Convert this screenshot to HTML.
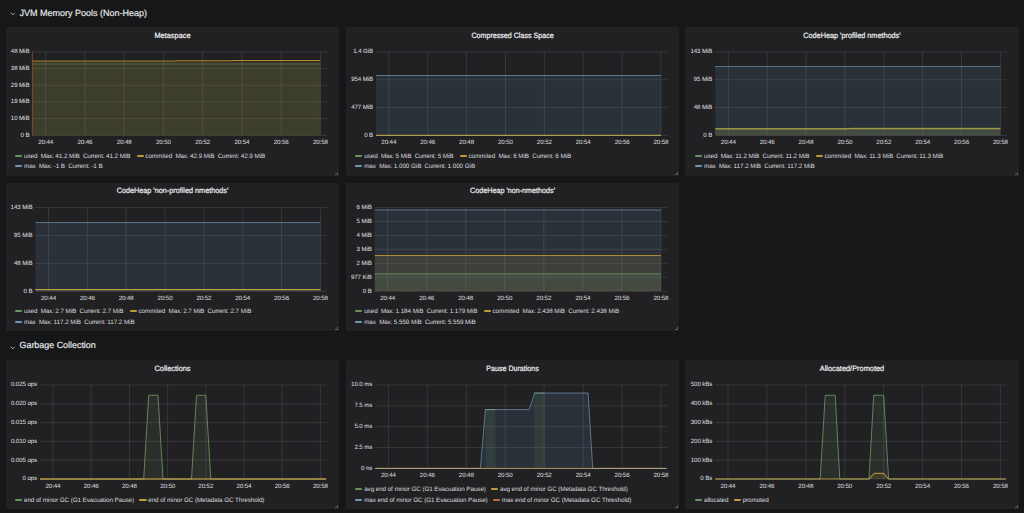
<!DOCTYPE html>
<html lang="en"><head><meta charset="utf-8"><title>JVM (Micrometer) - Grafana</title>
<style>
html,body{margin:0;padding:0;background:#161719;}
body{text-rendering:geometricPrecision;width:1024px;height:513px;position:relative;overflow:hidden;font-family:"Liberation Sans", sans-serif;color:#d8d9da;}
.rowt{position:absolute;left:0;height:14px;line-height:14px;font-size:9.0px;color:#e9e9ea;-webkit-text-stroke:.17px #e9e9ea;white-space:nowrap;}
.rowt svg{position:absolute;left:9.7px;top:6.9px}
.rowt span{position:absolute;left:19.5px;top:0}
.panel{position:absolute;width:333px;height:149px;background:#212124;border-radius:1.5px;overflow:hidden}
.panel svg{position:absolute;left:0;top:0}
text{font-family:"Liberation Sans", sans-serif;fill:#d8d9da;text-rendering:geometricPrecision}
.pt{font-size:7.7px;fill:#ececed;stroke:#ececed;stroke-width:.22px}
.ax{font-size:6.15px;letter-spacing:-.09px;fill:#dadbdd;stroke:#dadbdd;stroke-width:.05px}
.lg{position:absolute;left:9.4px;height:8px;line-height:8px;font-size:6.3px;letter-spacing:-.06px;white-space:nowrap;color:#dadbdd}
.li{display:inline-block;margin-right:6.2px}
.li.nv{margin-right:5.4px;font-size:6.3px;letter-spacing:-.08px}
.li i{display:inline-block;width:7.1px;height:2px;border-radius:.9px;opacity:.8;vertical-align:middle;margin-right:1.7px;position:relative;top:-0.3px}
.lv{margin-left:3.3px}
.lv u{text-decoration:none;letter-spacing:-.18px}
.rz{position:absolute;right:1.2px;bottom:1.2px;width:2.2px;height:2.2px;border-right:.7px solid #5c5d60;border-bottom:.7px solid #5c5d60}
</style></head><body>

<div class="rowt" style="top:5.6px"><svg style="top:6.5px" width="5.6" height="3.8" viewBox="0 0 6 4"><path d="M0.6 0.6L3 3L5.4 0.6" fill="none" stroke="#b4b5b8" stroke-width="0.95"/></svg><span style="font-size:9.0px">JVM Memory Pools (Non-Heap)</span></div>
<div class="rowt" style="top:338.3px"><svg style="top:7.3px" width="5.6" height="3.8" viewBox="0 0 6 4"><path d="M0.6 0.6L3 3L5.4 0.6" fill="none" stroke="#b4b5b8" stroke-width="0.95"/></svg><span style="font-size:8.92px">Garbage Collection</span></div>
<div class="panel" style="left:6px;top:27px;width:333px;height:149px"><svg width="333" height="149" viewBox="0 0 333 149"><text class="pt" x="166.5" y="11" text-anchor="middle" textLength="36.1" lengthAdjust="spacingAndGlyphs">Metaspace</text><path d="M26.3 24.8H321M26.3 41.52H321M26.3 58.24H321M26.3 74.96H321M26.3 91.68H321M26.3 108.4H321M39.6 24.8V108.4M78.86 24.8V108.4M118.11 24.8V108.4M157.37 24.8V108.4M196.63 24.8V108.4M235.89 24.8V108.4M275.14 24.8V108.4M314.4 24.8V108.4" stroke="#404144" stroke-width="0.7" fill="none"/><path d="M26.3 36.9 L314.4 36.9 L314.4 108.4 L26.3 108.4Z" fill="#7EB26D" fill-opacity="0.1" stroke="none"/><path d="M26.3 34.1 L168 34.1 L170 33.8 L224 33.8 L226 33.5 L314.4 33.5 L314.4 108.4 L26.3 108.4Z" fill="#EAB839" fill-opacity="0.1" stroke="none"/><path d="M26.3 36.9 L314.4 36.9" fill="none" stroke="#7EB26D" stroke-width="0.7" stroke-opacity="0.6" stroke-linejoin="round"/><path d="M26.3 34.1 L168 34.1 L170 33.8 L224 33.8 L226 33.5 L314.4 33.5" fill="none" stroke="#EAB839" stroke-width="0.75" stroke-opacity="0.9" stroke-linejoin="round"/><path d="M26.400000000000002 24.8V108.4" stroke="#a3452b" stroke-width="0.8" fill="none"/><text class="ax" x="23.4" y="26" text-anchor="end">48 MiB</text><text class="ax" x="23.4" y="43" text-anchor="end">38 MiB</text><text class="ax" x="23.4" y="60" text-anchor="end">29 MiB</text><text class="ax" x="23.4" y="76" text-anchor="end">19 MiB</text><text class="ax" x="23.4" y="93" text-anchor="end">10 MiB</text><text class="ax" x="23.4" y="110" text-anchor="end">0 B</text><text class="ax" x="39.6" y="117" text-anchor="middle">20:44</text><text class="ax" x="78.86" y="117" text-anchor="middle">20:46</text><text class="ax" x="118.11" y="117" text-anchor="middle">20:48</text><text class="ax" x="157.37" y="117" text-anchor="middle">20:50</text><text class="ax" x="196.63" y="117" text-anchor="middle">20:52</text><text class="ax" x="235.89" y="117" text-anchor="middle">20:54</text><text class="ax" x="275.14" y="117" text-anchor="middle">20:56</text><text class="ax" x="314.4" y="117" text-anchor="middle">20:58</text></svg><div class="lg" style="top:125.8px;left:9.2px"><span class="li"><i style="background:#7EB26D"></i><span class="ln">used</span><span class="lv"><u>Max:</u> 41.2 MiB</span><span class="lv"><u>Current:</u> 41.2 MiB</span></span><span class="li"><i style="background:#EAB839"></i><span class="ln">commited</span><span class="lv"><u>Max:</u> 42.9 MiB</span><span class="lv"><u>Current:</u> 42.9 MiB</span></span></div><div class="lg" style="top:135.8px;left:9.2px"><span class="li"><i style="background:#82B5D8"></i><span class="ln">max</span><span class="lv"><u>Max:</u> -1 B</span><span class="lv"><u>Current:</u> -1 B</span></span></div><b class="rz"></b></div>
<div class="panel" style="left:346px;top:27px;width:333.1px;height:149px"><svg width="333.1" height="149" viewBox="0 0 333.1 149"><text class="pt" x="166.55" y="11" text-anchor="middle" textLength="82.3" lengthAdjust="spacingAndGlyphs">Compressed Class Space</text><path d="M30 24.8H321.6M30 52.67H321.6M30 80.53H321.6M30 108.4H321.6M42.8 24.8V108.4M81.69 24.8V108.4M120.57 24.8V108.4M159.46 24.8V108.4M198.34 24.8V108.4M237.23 24.8V108.4M276.11 24.8V108.4M315 24.8V108.4" stroke="#404144" stroke-width="0.7" fill="none"/><path d="M30 108.35 L315 108.35 L315 108.4 L30 108.4Z" fill="#7EB26D" fill-opacity="0.1" stroke="none"/><path d="M30 108.35 L315 108.35 L315 108.4 L30 108.4Z" fill="#EAB839" fill-opacity="0.1" stroke="none"/><path d="M30 48.5 L315 48.5 L315 108.4 L30 108.4Z" fill="#7BC1EC" fill-opacity="0.1" stroke="none"/><path d="M30 108.35 L315 108.35" fill="none" stroke="#7EB26D" stroke-width="0.75" stroke-opacity="0.9" stroke-linejoin="round"/><path d="M30 108.35 L315 108.35" fill="none" stroke="#EAB839" stroke-width="0.75" stroke-opacity="0.9" stroke-linejoin="round"/><path d="M30 48.5 L315 48.5" fill="none" stroke="#82B5D8" stroke-width="0.75" stroke-opacity="0.75" stroke-linejoin="round"/><text class="ax" x="27.1" y="26" text-anchor="end">1.4 GiB</text><text class="ax" x="27.1" y="54" text-anchor="end">954 MiB</text><text class="ax" x="27.1" y="82" text-anchor="end">477 MiB</text><text class="ax" x="27.1" y="110" text-anchor="end">0 B</text><text class="ax" x="42.8" y="117" text-anchor="middle">20:44</text><text class="ax" x="81.69" y="117" text-anchor="middle">20:46</text><text class="ax" x="120.57" y="117" text-anchor="middle">20:48</text><text class="ax" x="159.46" y="117" text-anchor="middle">20:50</text><text class="ax" x="198.34" y="117" text-anchor="middle">20:52</text><text class="ax" x="237.23" y="117" text-anchor="middle">20:54</text><text class="ax" x="276.11" y="117" text-anchor="middle">20:56</text><text class="ax" x="315" y="117" text-anchor="middle">20:58</text></svg><div class="lg" style="top:125.8px;left:9.4px"><span class="li"><i style="background:#7EB26D"></i><span class="ln">used</span><span class="lv"><u>Max:</u> 5 MiB</span><span class="lv"><u>Current:</u> 5 MiB</span></span><span class="li"><i style="background:#EAB839"></i><span class="ln">commited</span><span class="lv"><u>Max:</u> 6 MiB</span><span class="lv"><u>Current:</u> 6 MiB</span></span></div><div class="lg" style="top:135.8px;left:9.4px"><span class="li"><i style="background:#82B5D8"></i><span class="ln">max</span><span class="lv"><u>Max:</u> 1.000 GiB</span><span class="lv"><u>Current:</u> 1.000 GiB</span></span></div><b class="rz"></b></div>
<div class="panel" style="left:685.2px;top:27px;width:333.9px;height:149px"><svg width="333.9" height="149" viewBox="0 0 333.9 149"><text class="pt" x="166.95" y="11" text-anchor="middle" textLength="97.3" lengthAdjust="spacingAndGlyphs">CodeHeap 'profiled nmethods'</text><path d="M30.2 24.8H321.8M30.2 52.67H321.8M30.2 80.53H321.8M30.2 108.4H321.8M43.3 24.8V108.4M82.17 24.8V108.4M121.04 24.8V108.4M159.91 24.8V108.4M198.79 24.8V108.4M237.66 24.8V108.4M276.53 24.8V108.4M315.4 24.8V108.4" stroke="#404144" stroke-width="0.7" fill="none"/><path d="M30.2 101.9 L315.4 101.9 L315.4 108.4 L30.2 108.4Z" fill="#7EB26D" fill-opacity="0.1" stroke="none"/><path d="M30.2 101.8 L160 101.8 L166 101.3 L315.4 101.3 L315.4 108.4 L30.2 108.4Z" fill="#EAB839" fill-opacity="0.1" stroke="none"/><path d="M30.2 39.6 L315.4 39.6 L315.4 108.4 L30.2 108.4Z" fill="#7BC1EC" fill-opacity="0.1" stroke="none"/><path d="M30.2 101.9 L315.4 101.9" fill="none" stroke="#7EB26D" stroke-width="0.75" stroke-opacity="0.9" stroke-linejoin="round"/><path d="M30.2 101.8 L160 101.8 L166 101.3 L315.4 101.3" fill="none" stroke="#EAB839" stroke-width="0.75" stroke-opacity="0.9" stroke-linejoin="round"/><path d="M30.2 39.6 L315.4 39.6" fill="none" stroke="#82B5D8" stroke-width="0.75" stroke-opacity="0.75" stroke-linejoin="round"/><text class="ax" x="27.3" y="26" text-anchor="end">143 MiB</text><text class="ax" x="27.3" y="54" text-anchor="end">95 MiB</text><text class="ax" x="27.3" y="82" text-anchor="end">48 MiB</text><text class="ax" x="27.3" y="110" text-anchor="end">0 B</text><text class="ax" x="43.3" y="117" text-anchor="middle">20:44</text><text class="ax" x="82.17" y="117" text-anchor="middle">20:46</text><text class="ax" x="121.04" y="117" text-anchor="middle">20:48</text><text class="ax" x="159.91" y="117" text-anchor="middle">20:50</text><text class="ax" x="198.79" y="117" text-anchor="middle">20:52</text><text class="ax" x="237.66" y="117" text-anchor="middle">20:54</text><text class="ax" x="276.53" y="117" text-anchor="middle">20:56</text><text class="ax" x="315.4" y="117" text-anchor="middle">20:58</text></svg><div class="lg" style="top:125.8px;left:10px"><span class="li"><i style="background:#7EB26D"></i><span class="ln">used</span><span class="lv"><u>Max:</u> 11.2 MiB</span><span class="lv"><u>Current:</u> 11.2 MiB</span></span><span class="li"><i style="background:#EAB839"></i><span class="ln">commited</span><span class="lv"><u>Max:</u> 11.3 MiB</span><span class="lv"><u>Current:</u> 11.3 MiB</span></span></div><div class="lg" style="top:135.8px;left:10px"><span class="li"><i style="background:#82B5D8"></i><span class="ln">max</span><span class="lv"><u>Max:</u> 117.2 MiB</span><span class="lv"><u>Current:</u> 117.2 MiB</span></span></div><b class="rz"></b></div>
<div class="panel" style="left:6px;top:183px;width:333px;height:148.4px"><svg width="333" height="148.4" viewBox="0 0 333 148.4"><text class="pt" x="166.5" y="10" text-anchor="middle" textLength="111.6" lengthAdjust="spacingAndGlyphs">CodeHeap 'non-profiled nmethods'</text><path d="M29.4 24.55H321M29.4 52.43H321M29.4 80.32H321M29.4 108.2H321M42.5 24.55V108.2M81.34 24.55V108.2M120.19 24.55V108.2M159.03 24.55V108.2M197.87 24.55V108.2M236.71 24.55V108.2M275.56 24.55V108.2M314.4 24.55V108.2" stroke="#404144" stroke-width="0.7" fill="none"/><path d="M29.4 106.6 L314.4 106.6 L314.4 108.2 L29.4 108.2Z" fill="#7EB26D" fill-opacity="0.1" stroke="none"/><path d="M29.4 106.5 L314.4 106.5 L314.4 108.2 L29.4 108.2Z" fill="#EAB839" fill-opacity="0.1" stroke="none"/><path d="M29.4 39.6 L314.4 39.6 L314.4 108.2 L29.4 108.2Z" fill="#7BC1EC" fill-opacity="0.1" stroke="none"/><path d="M29.4 106.6 L314.4 106.6" fill="none" stroke="#7EB26D" stroke-width="0.75" stroke-opacity="0.9" stroke-linejoin="round"/><path d="M29.4 106.5 L314.4 106.5" fill="none" stroke="#EAB839" stroke-width="0.75" stroke-opacity="0.9" stroke-linejoin="round"/><path d="M29.4 39.6 L314.4 39.6" fill="none" stroke="#82B5D8" stroke-width="0.75" stroke-opacity="0.75" stroke-linejoin="round"/><text class="ax" x="26.5" y="26" text-anchor="end">143 MiB</text><text class="ax" x="26.5" y="54" text-anchor="end">95 MiB</text><text class="ax" x="26.5" y="82" text-anchor="end">48 MiB</text><text class="ax" x="26.5" y="110" text-anchor="end">0 B</text><text class="ax" x="42.5" y="117" text-anchor="middle">20:44</text><text class="ax" x="81.34" y="117" text-anchor="middle">20:46</text><text class="ax" x="120.19" y="117" text-anchor="middle">20:48</text><text class="ax" x="159.03" y="117" text-anchor="middle">20:50</text><text class="ax" x="197.87" y="117" text-anchor="middle">20:52</text><text class="ax" x="236.71" y="117" text-anchor="middle">20:54</text><text class="ax" x="275.56" y="117" text-anchor="middle">20:56</text><text class="ax" x="314.4" y="117" text-anchor="middle">20:58</text></svg><div class="lg" style="top:124.8px;left:9.2px"><span class="li"><i style="background:#7EB26D"></i><span class="ln">used</span><span class="lv"><u>Max:</u> 2.7 MiB</span><span class="lv"><u>Current:</u> 2.7 MiB</span></span><span class="li"><i style="background:#EAB839"></i><span class="ln">commited</span><span class="lv"><u>Max:</u> 2.7 MiB</span><span class="lv"><u>Current:</u> 2.7 MiB</span></span></div><div class="lg" style="top:135.8px;left:9.2px"><span class="li"><i style="background:#82B5D8"></i><span class="ln">max</span><span class="lv"><u>Max:</u> 117.2 MiB</span><span class="lv"><u>Current:</u> 117.2 MiB</span></span></div><b class="rz"></b></div>
<div class="panel" style="left:346px;top:183px;width:333.1px;height:148.4px"><svg width="333.1" height="148.4" viewBox="0 0 333.1 148.4"><text class="pt" x="166.55" y="10" text-anchor="middle" textLength="85.0" lengthAdjust="spacingAndGlyphs">CodeHeap 'non-nmethods'</text><path d="M28.7 24.55H321.6M28.7 38.49H321.6M28.7 52.43H321.6M28.7 66.38H321.6M28.7 80.32H321.6M28.7 94.26H321.6M28.7 108.2H321.6M41.6 24.55V108.2M80.66 24.55V108.2M119.71 24.55V108.2M158.77 24.55V108.2M197.83 24.55V108.2M236.89 24.55V108.2M275.94 24.55V108.2M315 24.55V108.2" stroke="#404144" stroke-width="0.7" fill="none"/><path d="M28.7 90.95 L315 90.95 L315 108.2 L28.7 108.2Z" fill="#7EB26D" fill-opacity="0.1" stroke="none"/><path d="M28.7 72.56 L315 72.56 L315 108.2 L28.7 108.2Z" fill="#EAB839" fill-opacity="0.1" stroke="none"/><path d="M28.7 26.93 L315 26.93 L315 108.2 L28.7 108.2Z" fill="#7BC1EC" fill-opacity="0.1" stroke="none"/><path d="M28.7 90.95 L315 90.95" fill="none" stroke="#7EB26D" stroke-width="0.75" stroke-opacity="0.9" stroke-linejoin="round"/><path d="M28.7 72.56 L315 72.56" fill="none" stroke="#EAB839" stroke-width="0.75" stroke-opacity="0.9" stroke-linejoin="round"/><path d="M28.7 26.93 L315 26.93" fill="none" stroke="#82B5D8" stroke-width="0.75" stroke-opacity="0.75" stroke-linejoin="round"/><text class="ax" x="25.8" y="26" text-anchor="end">6 MiB</text><text class="ax" x="25.8" y="40" text-anchor="end">5 MiB</text><text class="ax" x="25.8" y="54" text-anchor="end">4 MiB</text><text class="ax" x="25.8" y="68" text-anchor="end">3 MiB</text><text class="ax" x="25.8" y="82" text-anchor="end">2 MiB</text><text class="ax" x="25.8" y="96" text-anchor="end">977 KiB</text><text class="ax" x="25.8" y="110" text-anchor="end">0 B</text><text class="ax" x="41.6" y="117" text-anchor="middle">20:44</text><text class="ax" x="80.66" y="117" text-anchor="middle">20:46</text><text class="ax" x="119.71" y="117" text-anchor="middle">20:48</text><text class="ax" x="158.77" y="117" text-anchor="middle">20:50</text><text class="ax" x="197.83" y="117" text-anchor="middle">20:52</text><text class="ax" x="236.89" y="117" text-anchor="middle">20:54</text><text class="ax" x="275.94" y="117" text-anchor="middle">20:56</text><text class="ax" x="315" y="117" text-anchor="middle">20:58</text></svg><div class="lg" style="top:124.8px;left:9.4px"><span class="li"><i style="background:#7EB26D"></i><span class="ln">used</span><span class="lv"><u>Max:</u> 1.184 MiB</span><span class="lv"><u>Current:</u> 1.179 MiB</span></span><span class="li"><i style="background:#EAB839"></i><span class="ln">commited</span><span class="lv"><u>Max:</u> 2.438 MiB</span><span class="lv"><u>Current:</u> 2.438 MiB</span></span></div><div class="lg" style="top:135.8px;left:9.4px"><span class="li"><i style="background:#82B5D8"></i><span class="ln">max</span><span class="lv"><u>Max:</u> 5.559 MiB</span><span class="lv"><u>Current:</u> 5.559 MiB</span></span></div><b class="rz"></b></div>
<div class="panel" style="left:6px;top:360px;width:333px;height:149px"><svg width="333" height="149" viewBox="0 0 333 149"><text class="pt" x="166.5" y="11" text-anchor="middle" textLength="36.0" lengthAdjust="spacingAndGlyphs">Collections</text><path d="M34 25H321M34 43.8H321M34 62.6H321M34 81.4H321M34 100.2H321M34 119H321M47 25V119M85.2 25V119M123.4 25V119M161.6 25V119M199.8 25V119M238 25V119M276.2 25V119M314.4 25V119" stroke="#404144" stroke-width="0.7" fill="none"/><path d="M34 119 L137.7 119 L142.7 35.3 L152 35.3 L157 119 L185.5 119 L190.5 35.3 L199.8 35.3 L204.8 119 L320 119 L320 119 L34 119Z" fill="#7EB26D" fill-opacity="0.1" stroke="none"/><path d="M34 119 L320 119 L320 119 L34 119Z" fill="#EAB839" fill-opacity="0.1" stroke="none"/><path d="M34 119 L137.7 119 L142.7 35.3 L152 35.3 L157 119 L185.5 119 L190.5 35.3 L199.8 35.3 L204.8 119 L320 119" fill="none" stroke="#7EB26D" stroke-width="0.75" stroke-opacity="0.9" stroke-linejoin="round"/><path d="M34 119 L320 119" fill="none" stroke="#D2A84A" stroke-width="1.3" stroke-opacity="0.72" stroke-linejoin="round"/><text class="ax" x="31.1" y="26" text-anchor="end">0.025 ops</text><text class="ax" x="31.1" y="45" text-anchor="end">0.020 ops</text><text class="ax" x="31.1" y="64" text-anchor="end">0.015 ops</text><text class="ax" x="31.1" y="83" text-anchor="end">0.010 ops</text><text class="ax" x="31.1" y="102" text-anchor="end">0.005 ops</text><text class="ax" x="31.1" y="120" text-anchor="end">0 ops</text><text class="ax" x="47" y="128" text-anchor="middle">20:44</text><text class="ax" x="85.2" y="128" text-anchor="middle">20:46</text><text class="ax" x="123.4" y="128" text-anchor="middle">20:48</text><text class="ax" x="161.6" y="128" text-anchor="middle">20:50</text><text class="ax" x="199.8" y="128" text-anchor="middle">20:52</text><text class="ax" x="238" y="128" text-anchor="middle">20:54</text><text class="ax" x="276.2" y="128" text-anchor="middle">20:56</text><text class="ax" x="314.4" y="128" text-anchor="middle">20:58</text></svg><div class="lg" style="top:136.8px;left:9.2px"><span class="li nv"><i style="background:#7EB26D"></i><span class="ln">end of minor GC (G1 Evacuation Pause)</span></span><span class="li nv"><i style="background:#EAB839"></i><span class="ln">end of minor GC (Metadata GC Threshold)</span></span></div><b class="rz"></b></div>
<div class="panel" style="left:346px;top:360px;width:333.1px;height:149px"><svg width="333.1" height="149" viewBox="0 0 333.1 149"><text class="pt" x="166.55" y="11" text-anchor="middle" textLength="52.6" lengthAdjust="spacingAndGlyphs">Pause Durations</text><path d="M29.2 25H321.6M29.2 45.85H321.6M29.2 66.7H321.6M29.2 87.55H321.6M29.2 108.4H321.6M42.4 25V108.4M81.34 25V108.4M120.29 25V108.4M159.23 25V108.4M198.17 25V108.4M237.11 25V108.4M276.06 25V108.4M315 25V108.4" stroke="#404144" stroke-width="0.7" fill="none"/><path d="M139.4 49.6 L149.3 49.6 L149.3 108.4 L139.4 108.4Z" fill="#7EB26D" fill-opacity="0.1" stroke="none"/><path d="M188.6 33 L198.6 33 L198.6 108.4 L188.6 108.4Z" fill="#7EB26D" fill-opacity="0.1" stroke="none"/><path d="M29.2 108.4 L134.4 108.4 L139.4 49.6 L183.2 49.6 L188.6 33 L242.1 33 L246.7 108.4 L320.6 108.4 L320.6 108.4 L29.2 108.4Z" fill="#7BC1EC" fill-opacity="0.1" stroke="none"/><path d="M139.4 49.6 L149.3 49.6" fill="none" stroke="#7EB26D" stroke-width="0.6" stroke-opacity="0.9" stroke-linejoin="round"/><path d="M188.6 33 L198.6 33" fill="none" stroke="#7EB26D" stroke-width="0.6" stroke-opacity="0.9" stroke-linejoin="round"/><path d="M29.2 108.4 L134.4 108.4 L139.4 49.6 L183.2 49.6 L188.6 33 L242.1 33 L246.7 108.4 L320.6 108.4" fill="none" stroke="#82B5D8" stroke-width="0.75" stroke-opacity="0.75" stroke-linejoin="round"/><path d="M29.2 108.4 L320.6 108.4" fill="none" stroke="#D9B070" stroke-width="1.0" stroke-opacity="0.75" stroke-linejoin="round"/><text class="ax" x="26.3" y="26" text-anchor="end">10.0 ms</text><text class="ax" x="26.3" y="47" text-anchor="end">7.5 ms</text><text class="ax" x="26.3" y="68" text-anchor="end">5.0 ms</text><text class="ax" x="26.3" y="89" text-anchor="end">2.5 ms</text><text class="ax" x="26.3" y="110" text-anchor="end">0 ns</text><text class="ax" x="42.4" y="117" text-anchor="middle">20:44</text><text class="ax" x="81.34" y="117" text-anchor="middle">20:46</text><text class="ax" x="120.29" y="117" text-anchor="middle">20:48</text><text class="ax" x="159.23" y="117" text-anchor="middle">20:50</text><text class="ax" x="198.17" y="117" text-anchor="middle">20:52</text><text class="ax" x="237.11" y="117" text-anchor="middle">20:54</text><text class="ax" x="276.06" y="117" text-anchor="middle">20:56</text><text class="ax" x="315" y="117" text-anchor="middle">20:58</text></svg><div class="lg" style="top:125.8px;left:9.4px"><span class="li nv"><i style="background:#7EB26D"></i><span class="ln">avg end of minor GC (G1 Evacuation Pause)</span></span><span class="li nv"><i style="background:#EAB839"></i><span class="ln">avg end of minor GC (Metadata GC Threshold)</span></span></div><div class="lg" style="top:136.8px;left:9.4px"><span class="li nv"><i style="background:#82B5D8"></i><span class="ln">max end of minor GC (G1 Evacuation Pause)</span></span><span class="li nv"><i style="background:#EF843C"></i><span class="ln">max end of minor GC (Metadata GC Threshold)</span></span></div><b class="rz"></b></div>
<div class="panel" style="left:685.2px;top:360px;width:333.9px;height:149px"><svg width="333.9" height="149" viewBox="0 0 333.9 149"><text class="pt" x="166.95" y="11" text-anchor="middle" textLength="64.4" lengthAdjust="spacingAndGlyphs">Allocated/Promoted</text><path d="M30.2 25H321.8M30.2 43.8H321.8M30.2 62.6H321.8M30.2 81.4H321.8M30.2 100.2H321.8M30.2 119H321.8M43 25V119M81.91 25V119M120.83 25V119M159.74 25V119M198.66 25V119M237.57 25V119M276.49 25V119M315.4 25V119" stroke="#404144" stroke-width="0.7" fill="none"/><path d="M30.2 119 L135.2 119 L140.2 35.3 L150.2 35.3 L154.8 119 L184 119 L188.7 35.3 L198.7 35.3 L203.6 119 L320.8 119 L320.8 119 L30.2 119Z" fill="#7EB26D" fill-opacity="0.1" stroke="none"/><path d="M30.2 119 L184 119 L189.3 113.4 L198.7 113.4 L203.6 119 L320.8 119 L320.8 119 L30.2 119Z" fill="#EAB839" fill-opacity="0.1" stroke="none"/><path d="M30.2 119 L135.2 119 L140.2 35.3 L150.2 35.3 L154.8 119 L184 119 L188.7 35.3 L198.7 35.3 L203.6 119 L320.8 119" fill="none" stroke="#7EB26D" stroke-width="0.75" stroke-opacity="0.9" stroke-linejoin="round"/><path d="M30.2 119 L184 119 L189.3 113.4 L198.7 113.4 L203.6 119 L320.8 119" fill="none" stroke="#D2A84A" stroke-width="1.1" stroke-opacity="0.72" stroke-linejoin="round"/><text class="ax" x="27.3" y="26" text-anchor="end">500 kBs</text><text class="ax" x="27.3" y="45" text-anchor="end">400 kBs</text><text class="ax" x="27.3" y="64" text-anchor="end">300 kBs</text><text class="ax" x="27.3" y="83" text-anchor="end">200 kBs</text><text class="ax" x="27.3" y="102" text-anchor="end">100 kBs</text><text class="ax" x="27.3" y="120" text-anchor="end">0 Bs</text><text class="ax" x="43" y="128" text-anchor="middle">20:44</text><text class="ax" x="81.91" y="128" text-anchor="middle">20:46</text><text class="ax" x="120.83" y="128" text-anchor="middle">20:48</text><text class="ax" x="159.74" y="128" text-anchor="middle">20:50</text><text class="ax" x="198.66" y="128" text-anchor="middle">20:52</text><text class="ax" x="237.57" y="128" text-anchor="middle">20:54</text><text class="ax" x="276.49" y="128" text-anchor="middle">20:56</text><text class="ax" x="315.4" y="128" text-anchor="middle">20:58</text></svg><div class="lg" style="top:136.8px;left:10px"><span class="li nv"><i style="background:#7EB26D"></i><span class="ln">allocated</span></span><span class="li nv"><i style="background:#EAB839"></i><span class="ln">promoted</span></span></div><b class="rz"></b></div>
</body></html>
